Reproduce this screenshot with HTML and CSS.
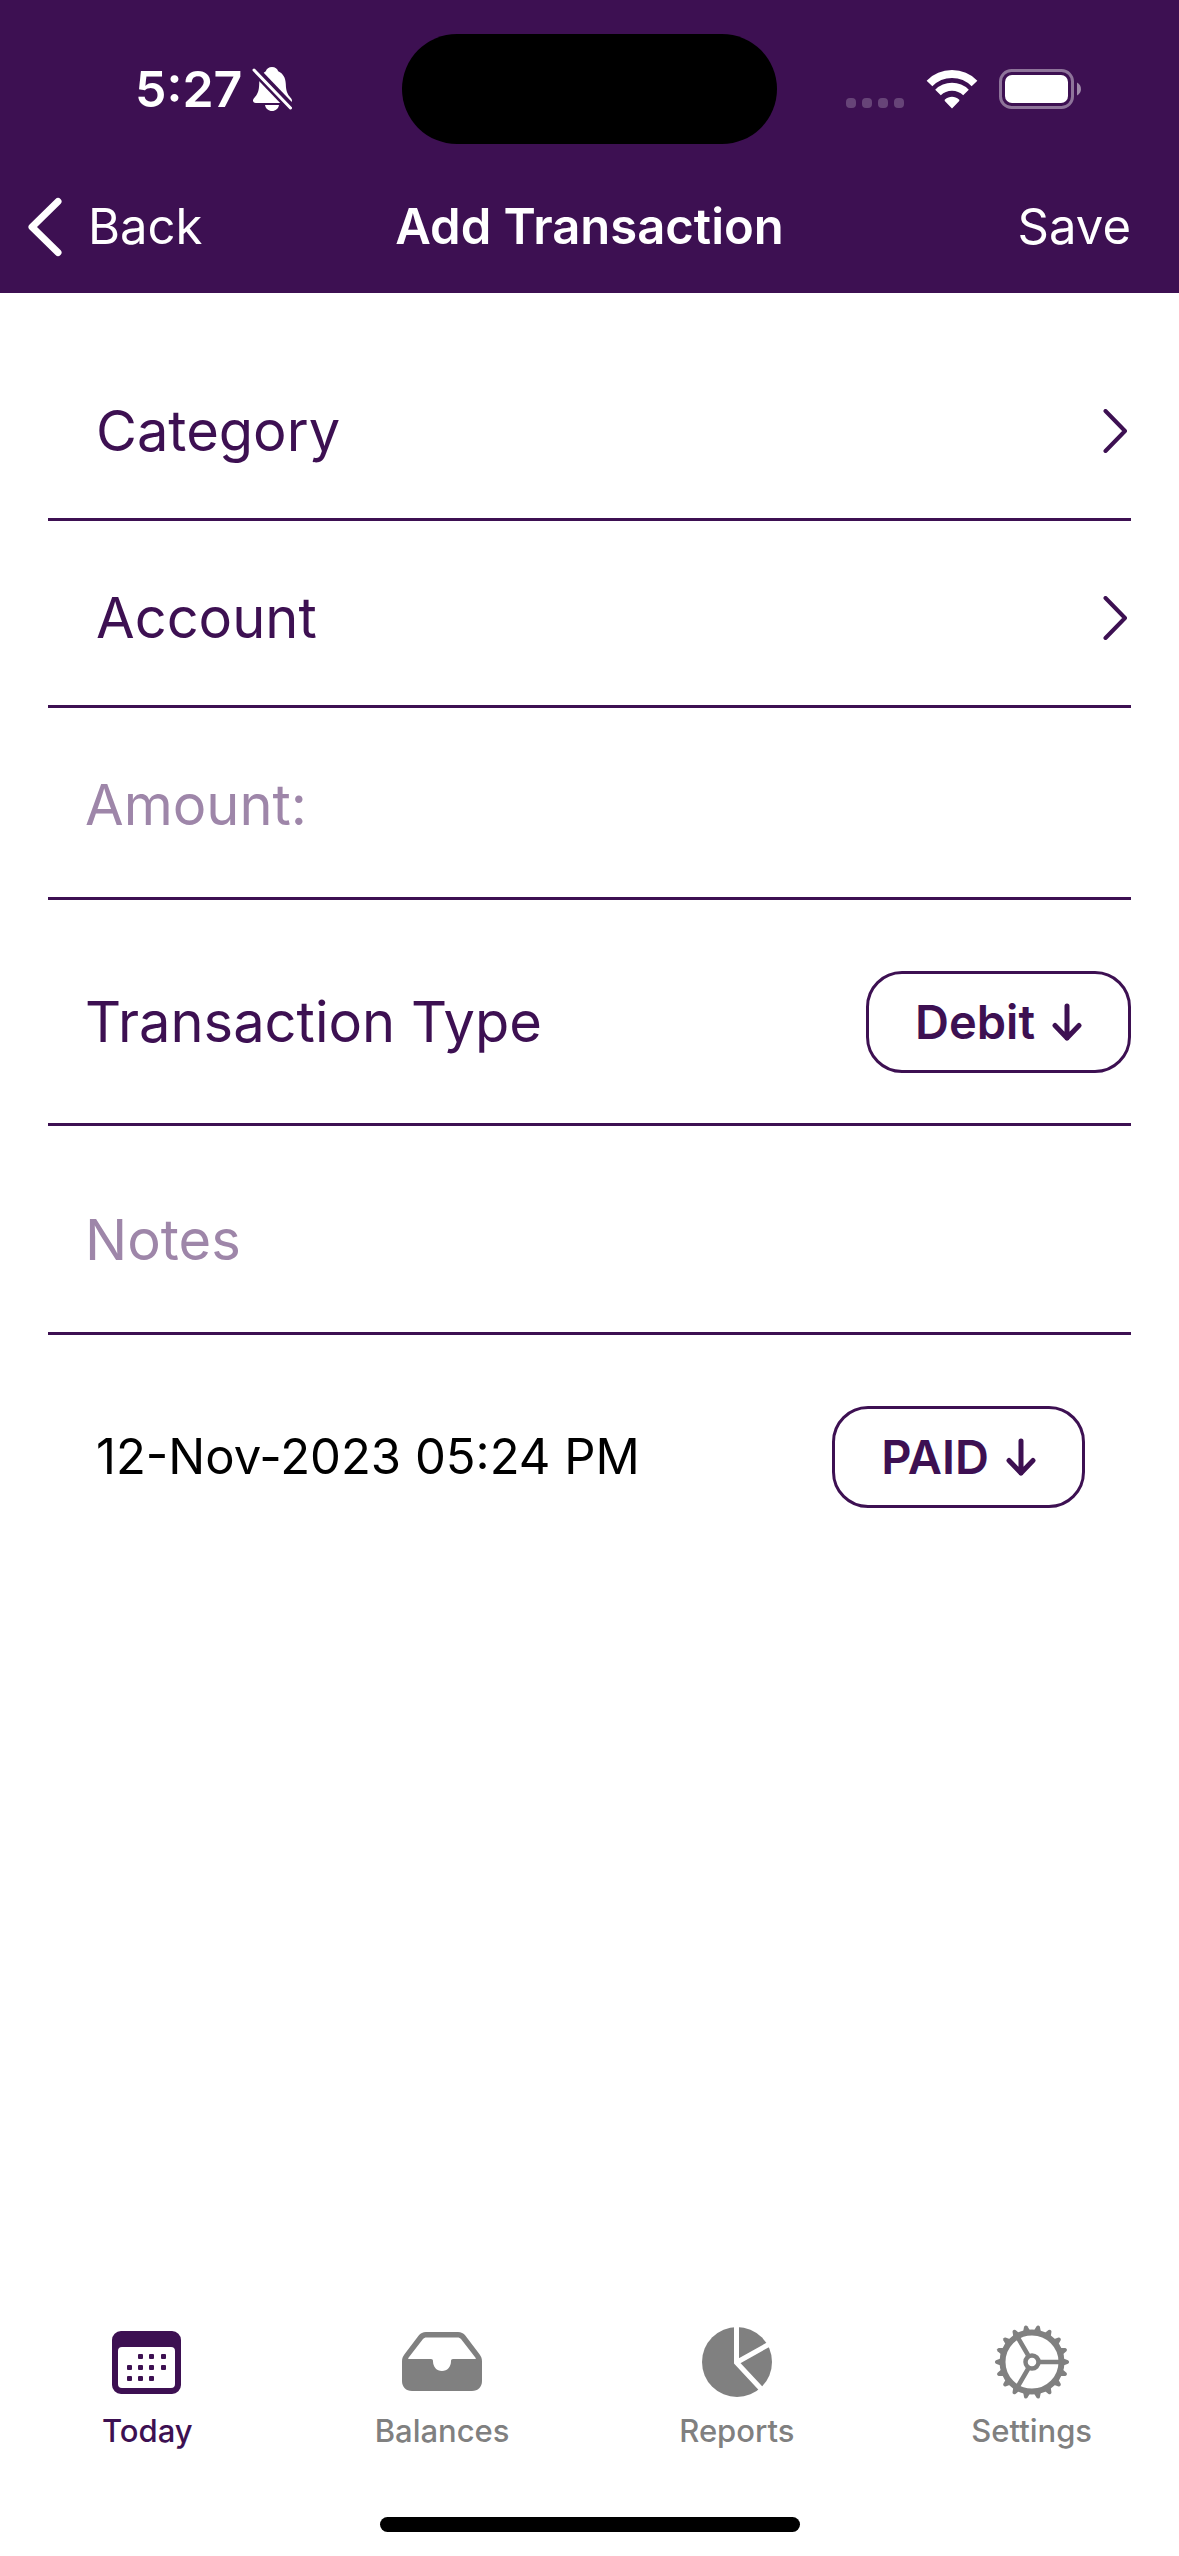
FILE: index.html
```html
<!DOCTYPE html>
<html lang="en">
<head>
<meta charset="utf-8">
<meta name="viewport" content="width=device-width, initial-scale=1">
<title>Add Transaction</title>
<link rel="stylesheet" href="styles.css">
</head>
<body class="app">
<header class="header">
  <div class="status">
    <div class="status-side">
      <span class="time">5:27</span>
      <svg class="bell" width="40" height="46" viewBox="0 0 40 46" aria-hidden="true">
        <path fill="#fff" d="M20 1c3.200 0 5.400 1.800 6.200 4.300 5 2.200 7.400 6.600 7.600 12.700.2 6.200 1.400 9.600 3.600 12.200 1.400 1.700 2.600 3 2.600 4.400 0 1.400-1 2.400-2.800 2.400H3.800C2 37 1 36 1 34.600c0-1.400 1.200-2.700 2.600-4.400 2.200-2.600 3.400-6 3.600-12.200.2-6.100 2.600-10.500 6.600-12.700C14.600 2.800 16.800 1 20 1z"/>
        <path fill="#fff" d="M13 39h14c-.6 3.600-3.400 6-7 6s-6.400-2.400-7-6z"/>
        <path stroke="#3d1052" stroke-width="9" d="M-2-1 44 47"/>
        <path stroke="#fff" stroke-width="3" stroke-linecap="round" d="M2 4 38.500 42"/>
      </svg>
    </div>
    <div class="island"></div>
    <div class="status-side status-end">
      <svg width="236" height="42" viewBox="0 0 236 42" aria-hidden="true">
        <g fill="#fff" fill-opacity=".22"><rect y="30" width="10" height="10" rx="4"/><rect x="16" y="30" width="10" height="10" rx="4"/><rect x="32" y="30" width="10" height="10" rx="4"/><rect x="48" y="30" width="10" height="10" rx="4"/></g>
        <g fill="none" stroke="#fff" stroke-width="8"><path d="M83.500 15.500a31.500 31.500 0 0 1 45 0"/><path d="M92 24.500a20 20 0 0 1 28 0"/></g>
        <path fill="#fff" d="M106 40.500l-7-7.300c-.5-.5-.5-1.300 0-1.700 4.200-3.600 9.800-3.600 14 0 .5.4.5 1.200 0 1.700z"/>
        <rect x="154.500" y="2.500" width="72" height="37" rx="11" fill="none" stroke="#fff" stroke-opacity=".42" stroke-width="3"/>
        <rect x="159" y="7" width="63" height="28" rx="7" fill="#fff"/>
        <path fill="#fff" fill-opacity=".5" d="M231 14.500c5.300 2.500 5.300 10.500 0 13z"/>
      </svg>
    </div>
  </div>
  <nav class="navbar">
    <button class="nav-button back" type="button">
      <svg width="34" height="60" viewBox="0 0 34 60" aria-hidden="true"><path fill="none" stroke="#fff" stroke-width="7" stroke-linecap="round" stroke-linejoin="round" d="M30 4.500 4 30l26 25.500"/></svg>
      <span>Back</span>
    </button>
    <h1 class="title">Add Transaction</h1>
    <button class="nav-button save" type="submit" form="transaction">Save</button>
  </nav>
</header>

<main class="main">
  <form id="transaction" class="form">
    <button class="row row-link" type="button">
      <span>Category</span>
      <svg width="28" height="44" viewBox="0 0 28 44" aria-hidden="true"><path class="stroke" d="M2.500 2 22 22 2.500 42"/></svg>
    </button>
    <button class="row row-link" type="button">
      <span>Account</span>
      <svg width="28" height="44" viewBox="0 0 28 44" aria-hidden="true"><path class="stroke" d="M2.500 2 22 22 2.500 42"/></svg>
    </button>
    <div class="row row-amount">
      <input class="field" type="text" inputmode="decimal" aria-label="Amount" placeholder="Amount:">
    </div>
    <div class="row row-type">
      <span id="type-label">Transaction Type</span>
      <button class="pill" type="button" aria-haspopup="menu" aria-describedby="type-label">
        <span>Debit</span>
        <svg width="30" height="38" viewBox="0 0 30 38" aria-hidden="true"><path class="stroke stroke-bold" d="M15 3v32M3 22.500 15 35l12-12.500"/></svg>
      </button>
    </div>
    <div class="row row-notes">
      <input class="field" type="text" aria-label="Notes" placeholder="Notes">
    </div>
    <div class="row row-date">
      <button class="date" type="button">12-Nov-2023 05:24 PM</button>
      <button class="pill" type="button" aria-haspopup="menu">
        <span>PAID</span>
        <svg width="30" height="38" viewBox="0 0 30 38" aria-hidden="true"><path class="stroke stroke-bold" d="M15 3v32M3 22.500 15 35l12-12.500"/></svg>
      </button>
    </div>
  </form>
</main>

<footer class="footer">
  <nav class="tabs">
    <a class="tab tab-active" href="#today" aria-current="page">
      <svg width="80" height="76" viewBox="0 0 80 76" aria-hidden="true">
        <path fill="currentColor" fill-rule="evenodd" d="M14 7h51a9 9 0 0 1 9 9v45a9 9 0 0 1-9 9H14a9 9 0 0 1-9-9V16a9 9 0 0 1 9-9zm1 16a4 4 0 0 0-4 4v33a4 4 0 0 0 4 4h49a4 4 0 0 0 4-4V27a4 4 0 0 0-4-4z"/>
        <g fill="currentColor"><rect x="31" y="30" width="5" height="5" rx="1"/><rect x="42" y="30" width="5" height="5" rx="1"/><rect x="54" y="30" width="5" height="5" rx="1"/><rect x="20" y="41" width="5" height="5" rx="1"/><rect x="31" y="41" width="5" height="5" rx="1"/><rect x="42" y="41" width="5" height="5" rx="1"/><rect x="54" y="41" width="5" height="5" rx="1"/><rect x="20" y="52" width="5" height="5" rx="1"/><rect x="31" y="52" width="5" height="5" rx="1"/><rect x="42" y="52" width="5" height="5" rx="1"/></g>
      </svg>
      <span>Today</span>
    </a>
    <a class="tab" href="#balances">
      <svg width="80" height="76" viewBox="0 0 80 76" aria-hidden="true">
        <path fill="currentColor" fill-rule="evenodd" d="M24 8h32c3 0 5.500 1.200 7.500 3.700l14 18.600c1.700 2.300 2.500 4.200 2.500 7V57c0 6-4 10-10 10H10C4 67 0 63 0 57V37.300c0-2.800.8-4.700 2.500-7l14-18.600C18.500 9.200 21 8 24 8zm.5 5.500c-1.500 0-2.700.5-3.700 1.800L6.500 33.800c-.6.800-.3 1.200.5 1.200h22c1.300 0 2 .7 2 2 0 6 3.700 10 9 10s9-4 9-10c0-1.300.7-2 2-2h22c.8 0 1.100-.4.500-1.200L59.200 15.300c-1-1.300-2.200-1.800-3.700-1.800z"/>
      </svg>
      <span>Balances</span>
    </a>
    <a class="tab" href="#reports">
      <svg width="80" height="76" viewBox="0 0 80 76" aria-hidden="true">
        <circle cx="40" cy="38" r="35" fill="currentColor"/>
        <path fill="none" stroke="#fff" stroke-width="5" d="M39.500 0v38.500L67 68M39.500 38.500 77 17.500"/>
      </svg>
      <span>Reports</span>
    </a>
    <a class="tab" href="#settings">
      <svg width="80" height="76" viewBox="0 0 80 76" aria-hidden="true">
        <g fill="none" stroke="currentColor">
          <circle cx="40" cy="38" r="29.500" stroke-width="6"/>
          <circle cx="40" cy="38" r="6.500" stroke-width="4.500"/>
          <path stroke-width="4.500" d="M48 38h20M36 31 25.500 13M36 45 25.500 63"/>
        </g>
        <g fill="currentColor">
          <g id="teeth"><path id="tooth" d="M70 34l6 2.300a1.900 1.900 0 0 1 0 3.400l-6 2.300z"/><use href="#tooth" transform="rotate(20 40 38)"/><use href="#tooth" transform="rotate(40 40 38)"/><use href="#tooth" transform="rotate(60 40 38)"/><use href="#tooth" transform="rotate(80 40 38)"/><use href="#tooth" transform="rotate(100 40 38)"/></g>
          <use href="#teeth" transform="rotate(120 40 38)"/><use href="#teeth" transform="rotate(240 40 38)"/>
        </g>
      </svg>
      <span>Settings</span>
    </a>
  </nav>
  <div class="home-bar"></div>
</footer>
</body>
</html>
```
FILE: styles.css
```css
:root {
  --purple: #3d1052;
  --placeholder: #9e86a9;
  --gray: #808080;
}

* {
  box-sizing: border-box;
}

.app {
  display: flex;
  flex-direction: column;
  min-height: 100vh;
  margin: 0;
  background: #fff;
  color: var(--purple);
  font-family: Inter, "Liberation Sans", sans-serif;
}

button,
input {
  margin: 0;
  padding: 0;
  border: 0;
  background: none;
  color: inherit;
  font: inherit;
}

svg {
  display: block;
  flex: none;
}

.stroke {
  fill: none;
  stroke: var(--purple);
  stroke-width: 4;
  stroke-linecap: round;
  stroke-linejoin: round;
}

.stroke-bold {
  stroke-width: 5;
}

/* Header */

.header {
  padding-top: 34px;
  background: var(--purple);
  color: #fff;
}

.status,
.navbar {
  display: grid;
  grid-template-columns: 1fr auto 1fr;
  align-items: center;
}

.status {
  height: 110px;
}

.status-side {
  display: flex;
  align-items: center;
  gap: 10px;
  padding-left: 135px;
}

.status-end {
  justify-content: flex-end;
  padding: 0 97px 0 0;
}

.time {
  font-size: 50px;
  font-weight: 600;
  line-height: 60px;
}

.island {
  width: 375px;
  height: 110px;
  border-radius: 55px;
  background: #000;
}

.navbar {
  height: 149px;
  padding: 16px 48px 0 28px;
  font-size: 49px;
  line-height: 60px;
}

.nav-button {
  display: flex;
  align-items: center;
  gap: 26px;
}

.save {
  justify-self: end;
}

.title {
  margin: 0;
  padding-left: 20px;
  font-size: 49px;
  font-weight: 600;
}

/* Form */

.main {
  flex: 1;
  padding: 41px 48px 0;
}

.form {
  display: flex;
  flex-direction: column;
}

.row {
  display: flex;
  align-items: center;
  justify-content: space-between;
  width: 100%;
  padding: 61px 0 51px 37px;
  border-bottom: 3px solid var(--purple);
  font-size: 56px;
  line-height: 72px;
}

.row-link {
  padding-left: 48px;
}

.row-amount {
  padding-bottom: 56px;
}

.row-type {
  padding: 71px 0 50px 37px;
}

.row-notes {
  padding: 78px 0 56px 37px;
}

.row-date {
  padding: 71px 46px 70px 48px;
  border-bottom: 0;
}

.field {
  width: 100%;
  height: 72px;
  outline: 0;
}

.field::placeholder {
  color: var(--placeholder);
  opacity: 1;
}

.pill {
  display: flex;
  align-items: center;
  gap: 17px;
  height: 102px;
  padding: 0 46px;
  border: 3px solid var(--purple);
  border-radius: 36px;
  font-size: 47px;
  font-weight: 600;
  line-height: 60px;
}

.date {
  color: #000;
  font-size: 49px;
  line-height: 60px;
}

/* Tab bar */

.footer {
  display: flex;
  flex-direction: column;
  align-items: center;
  gap: 68px;
  padding-bottom: 24px;
}

.tabs {
  display: flex;
  width: 100%;
}

.tab {
  display: flex;
  flex: 1;
  flex-direction: column;
  align-items: center;
  gap: 13px;
  color: var(--gray);
  font-size: 31px;
  font-weight: 500;
  line-height: 36px;
  text-decoration: none;
}

.tab-active {
  color: var(--purple);
}

.home-bar {
  width: 420px;
  height: 15px;
  border-radius: 8px;
  background: #000;
}
```
